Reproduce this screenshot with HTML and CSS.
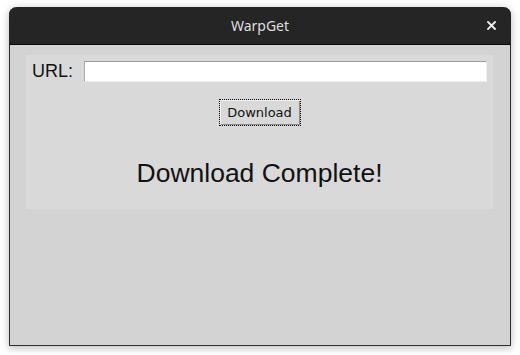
FILE: index.html
```html
<!DOCTYPE html>
<html lang="en">

<head>
    <meta charset="UTF-8">
    <meta name="viewport" content="width=device-width, initial-scale=1.0">
    <title>WarpGet</title>
    <link rel="stylesheet" href="styles.css">
</head>

<body>

    <div class="window">
        <div class="titlebar">
            <span class="title">WarpGet</span>
            <button class="close" aria-label="Close">
                <svg width="9" height="9" viewBox="0 0 9 9">
                    <path d="M1 1 L8 8 M8 1 L1 8" stroke="#f2f2f2" stroke-width="1.8" stroke-linecap="square" />
                </svg>
            </button>
        </div>

        <div class="content">
            <div class="panel">
                <div class="url-row">
                    <label class="url-label">URL:</label>
                    <input type="text" class="url-input">
                </div>
                <button class="download-btn">Download</button>
                <p class="status">Download Complete!</p>
            </div>
        </div>
    </div>

</body>

</html>
```

FILE: styles.css
```css
body {
    margin: 0;
    padding: 7px 9px;
    background-color: #ffffff;
    font-family: "Liberation Sans", Arial, sans-serif;
}

.window {
    width: 502px;
    height: 339px;
    box-sizing: border-box;
    display: flex;
    flex-direction: column;
    border-radius: 8px 8px 0 0;
    box-shadow: 0 2px 9px rgba(0, 0, 0, 0.28);
    background-color: #d3d3d3;
    border: 1px solid #2e2e2e;
    border-top: none;
}

.titlebar {
    height: 37px;
    flex-shrink: 0;
    margin: 0 -1px;
    display: flex;
    align-items: center;
    justify-content: center;
    position: relative;
    background-color: #252525;
    border-radius: 8px 8px 0 0;
    border-bottom: 1px solid #0a0a0a;
}

.title {
    font-family: "Noto Sans", sans-serif;
    font-size: 14px;
    color: #dedede;
}

.close {
    position: absolute;
    right: 15px;
    top: 14px;
    width: 9px;
    height: 9px;
    padding: 0;
    border: none;
    background: none;
    display: flex;
    align-items: center;
    justify-content: center;
}

.content {
    flex: 1;
    padding: 10px 17px 0 16px;
}

.panel {
    background-color: #d9d9d9;
    padding: 6px 6px 20px 6px;
    display: flex;
    flex-direction: column;
    align-items: center;
}

.url-row {
    align-self: stretch;
    display: flex;
    align-items: center;
    height: 21px;
}

.url-label {
    font-size: 18px;
    color: #111;
    width: 52px;
}

.url-input {
    width: 403px;
    height: 21px;
    box-sizing: border-box;
    margin: 0;
    padding: 0 3px;
    background-color: #fff;
    border: 1px solid #eeeeee;
    border-top-color: #9a9a9a;
    border-left-color: #a8a8a8;
}

.download-btn {
    margin-top: 17px;
    width: 82px;
    height: 27px;
    padding: 0;
    font-family: "DejaVu Sans", sans-serif;
    font-size: 13px;
    color: #111;
    background-color: #d9d9d9;
    border: 1px dotted #000;
    box-shadow: inset 1px 1px 0 #f0f0f0, inset -1px -1px 0 #8a8a8a;
}

.status {
    margin: 32px 0 0 0;
    font-size: 26.5px;
    color: #111;
}
```
